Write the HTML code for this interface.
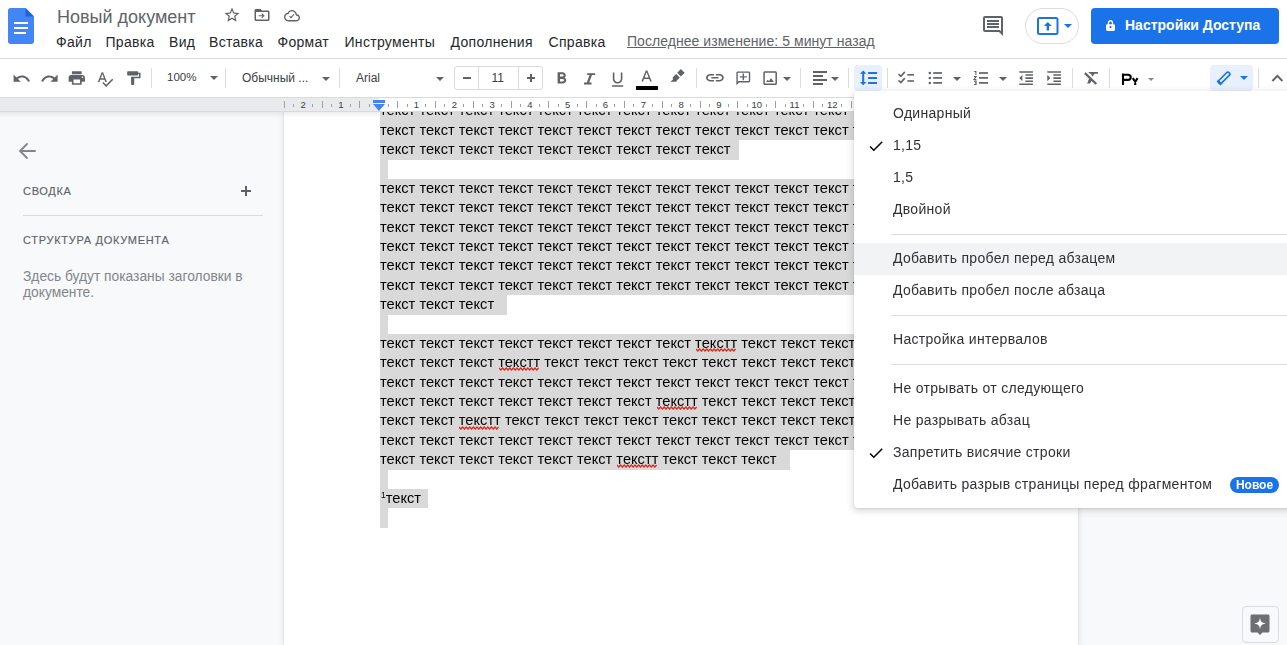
<!DOCTYPE html>
<html><head><meta charset="utf-8">
<style>
*{box-sizing:border-box;margin:0;padding:0}
html,body{width:1287px;height:645px;overflow:hidden;background:#f8f9fa;font-family:"Liberation Sans",sans-serif;color:#202124;position:relative}
.a{position:absolute}
svg{position:absolute;display:block}
#hdr{left:0;top:0;width:1287px;height:58px;background:#fff}
#hline{left:0;top:58px;width:1287px;height:1px;background:#dadce0}
#tb{left:0;top:59px;width:1287px;height:38px;background:#fff}
#title{left:57px;top:4.5px;font-size:18px;line-height:24px;color:#5f6368;white-space:nowrap}
.menu{position:absolute;top:32.7px;font-size:14px;letter-spacing:.3px;color:#26272a;white-space:nowrap;line-height:18px}
#last{left:627px;top:31.9px;letter-spacing:.05px;font-size:14px;line-height:18px;color:#5f6368;text-decoration:underline;white-space:nowrap}
#pill{left:1025px;top:8px;width:54px;height:36px;border:1px solid #dadce0;border-radius:18px;background:#fff}
#share{left:1091px;top:8px;width:188px;height:36px;border-radius:4px;background:#1a73e8}
#share span{position:absolute;left:34px;top:7.8px;font-size:14px;line-height:18px;font-weight:bold;color:#fff;white-space:nowrap}
.tsep{position:absolute;top:68px;width:1px;height:20px;background:#dadce0}
.tt{position:absolute;top:71px;font-size:12px;line-height:14px;color:#3c4043;white-space:nowrap}
.car{position:absolute;width:0;height:0;border-left:4px solid transparent;border-right:4px solid transparent;border-top:4px solid #5f6368}
#fsbox{left:454px;top:66px;width:89px;height:24px;border:1px solid #dadce0;border-radius:3px}
.act{position:absolute;top:65px;height:26px;background:#e8f0fe;border-radius:4px}
#ruler{left:0;top:97px;width:1287px;height:15px;background:#e8eaed;border-top:1px solid #d8dade;border-bottom:1px solid #d8dade}
#rwhite{left:379px;top:98px;width:603px;height:13px;background:#fff}
.rt{position:absolute;width:1px;background:#9aa0a6}
.rs{top:104px;height:3px}
.rl{top:101px;height:7px}
.rn{position:absolute;top:100px;width:20px;text-align:center;font-size:9.5px;line-height:10px;color:#3c4043}
#page{left:284px;top:112px;width:794px;height:533px;background:#fff;box-shadow:0 0 0 .5px rgba(60,64,67,.06),0 1px 5px 1px rgba(60,64,67,.12)}
#shade{left:0;top:112px;width:1287px;height:6px;background:linear-gradient(rgba(60,64,67,.09),rgba(60,64,67,0))}
.ln{position:absolute;left:380px;height:19.38px;line-height:19.38px;font-size:14.67px;color:#000;background:#d9d9d9;white-space:nowrap}
.full{width:602px;overflow:hidden}
.end{padding-right:8px}
.emp{width:8px}
.ln sup{font-size:8.5px;vertical-align:top;line-height:10px;position:relative;top:0.8px;padding-left:1px}

#side .h{position:absolute;left:23px;font-size:11px;font-weight:normal;-webkit-text-stroke:.15px #5f6368;color:#5f6368;letter-spacing:.7px;white-space:nowrap;line-height:14px}
#dd{left:854px;top:91px;width:450px;height:417px;background:#fff;border-radius:4px;box-shadow:0 2px 6px 2px rgba(60,64,67,.15),0 1px 2px 0 rgba(60,64,67,.12)}
.mi{position:absolute;left:893px;margin-top:-.2px;font-size:14px;letter-spacing:.3px;color:#303134;line-height:32px;height:32px;white-space:nowrap}
.hov{position:absolute;left:854px;width:433px;height:32px;background:#f1f3f4}
.sep{position:absolute;left:891px;width:396px;height:1px;background:#dadce0}
#badge{left:1230px;top:477px;width:49px;height:16px;border-radius:8px;background:#1a73e8;color:#fff;font-size:12px;font-weight:bold;line-height:16px;text-align:center}
#fab{left:1241.5px;top:606px;width:37px;height:37px;border:1px solid #dadce0;border-radius:4px;background:#f8f9fa}
</style></head><body>
<div id="hdr" class="a"></div>
<div id="hline" class="a"></div>
<div id="tb" class="a"></div>
<!-- docs logo -->
<svg style="left:8px;top:8px" width="26" height="36" viewBox="0 0 26 36">
<path d="M2.5 0H17.5L26 8.5V33.5C26 34.9 24.9 36 23.5 36H2.5C1.1 36 0 34.9 0 33.5V2.5C0 1.1 1.1 0 2.5 0Z" fill="#4285f4"/>
<path d="M17.5 0L26 8.5H17.5Z" fill="#1f65d6"/>
<rect x="6" y="14" width="14" height="2" fill="#fff"/>
<rect x="6" y="19" width="14" height="2" fill="#fff"/>
<rect x="6" y="24" width="12" height="2" fill="#fff"/>
</svg>
<div id="title" class="a">Новый документ</div>
<!-- star -->
<svg style="left:223px;top:6px" width="18" height="18" viewBox="0 0 24 24"><path fill="#5f6368" d="M22 9.24l-7.19-.62L12 2 9.19 8.63 2 9.24l5.46 4.73L5.82 21 12 17.27 18.18 21l-1.63-7.03L22 9.24zM12 15.4l-3.76 2.27 1-4.28-3.32-2.88 4.38-.38L12 6.1l1.71 4.04 4.38.38-3.32 2.88 1 4.28L12 15.4z"/></svg>
<!-- folder move -->
<svg style="left:252.5px;top:6px" width="18" height="18" viewBox="0 0 24 24"><path fill="#5f6368" d="M20 6h-8l-2-2H4c-1.1 0-2 .9-2 2v12c0 1.1.9 2 2 2h16c1.1 0 2-.9 2-2V8c0-1.1-.9-2-2-2zm0 12H4V8h16v10zM12.16 9.6l-1.06 1.06 1.59 1.59H7.5v1.5h5.19l-1.59 1.59 1.06 1.06L15.57 13z"/></svg>
<!-- cloud -->
<svg style="left:284px;top:7px" width="16" height="17.3" viewBox="0 0 24 24" preserveAspectRatio="none"><path fill="#5f6368" d="M19.35 10.04C18.67 6.59 15.64 4 12 4 9.11 4 6.6 5.64 5.35 8.04 2.34 8.36 0 10.91 0 14c0 3.31 2.69 6 6 6h13c2.76 0 5-2.24 5-5 0-2.64-2.05-4.780-4.65-4.96zM19 18H6c-2.21 0-4-1.79-4-4 0-2.05 1.53-3.76 3.56-3.97l1.07-.11.5-.95C8.08 7.14 9.94 6 12 6c2.62 0 4.88 1.86 5.39 4.43l.3 1.5 1.53.11c1.56.1 2.78 1.41 2.78 2.96 0 1.65-1.35 3-3 3zm-8.5-2.2l-2.6-2.6 1.1-1.1 1.5 1.5 3.9-3.9 1.1 1.1z"/></svg>
<!-- menus -->
<div class="menu" style="left:56px">Файл</div>
<div class="menu" style="left:105.5px">Правка</div>
<div class="menu" style="left:169px">Вид</div>
<div class="menu" style="left:209px">Вставка</div>
<div class="menu" style="left:277.5px">Формат</div>
<div class="menu" style="left:344.5px">Инструменты</div>
<div class="menu" style="left:450.5px">Дополнения</div>
<div class="menu" style="left:548.5px">Справка</div>
<div id="last" class="a">Последнее изменение: 5 минут назад</div>
<!-- comment icon -->
<svg style="left:981px;top:14px" width="24" height="24" viewBox="0 0 24 24"><path fill="#5f6368" d="M21.99 4c0-1.1-.89-2-1.99-2H4c-1.1 0-2 .9-2 2v12c0 1.1.9 2 2 2h14l4 4-.01-18zM20 4v13.17L18.83 16H4V4h16zM6 12h12v2H6zm0-3h12v2H6zm0-3h12v2H6z"/></svg>
<div id="pill" class="a"></div>
<svg style="left:1036px;top:16px" width="24" height="20" viewBox="0 0 24 20"><rect x="2" y="2" width="19.5" height="16" rx="1.5" fill="none" stroke="#1a73e8" stroke-width="2"/><path fill="#1a73e8" d="M11.8 6l-4 4h2.8v4.5h2.4V10h2.8z"/></svg>
<div class="car" style="left:1064px;top:24px;border-top-color:#1a73e8"></div>
<div id="share" class="a"><svg style="left:15px;top:12.3px" width="9" height="11" viewBox="0 0 10 12"><path fill="#fff" d="M2 4.5V3.2C2 1.4 3.3 0 5 0s3 1.4 3 3.2v1.3h.5c.8 0 1.5.7 1.5 1.5v4.5c0 .8-.7 1.5-1.5 1.5h-7C.7 12 0 11.3 0 10.5V6c0-.8.7-1.5 1.5-1.5zm1.5 0h3V3.2C6.5 2.2 5.8 1.5 5 1.5s-1.5.7-1.5 1.7zM5 6.6c-.7 0-1.2.5-1.2 1.2S4.3 9 5 9s1.2-.5 1.2-1.2S5.7 6.6 5 6.6z"/></svg><span>Настройки Доступа</span></div>
<!-- toolbar -->
<svg style="left:11.9px;top:68.5px" width="19.2" height="19.2" viewBox="0 0 24 24"><path fill="#5f6368" d="M12.5 8c-2.65 0-5.05.99-6.9 2.6L2 7v9h9l-3.62-3.62c1.39-1.16 3.16-1.88 5.12-1.88 3.54 0 6.55 2.31 7.6 5.5l2.37-.78C21.08 11.03 17.15 8 12.5 8z"/></svg>
<svg style="left:39.9px;top:68.5px" width="19.2" height="19.2" viewBox="0 0 24 24"><path fill="#5f6368" d="M18.4 10.6C16.55 8.99 14.15 8 11.5 8c-4.650 0-8.58 3.03-9.96 7.22L3.9 16c1.05-3.19 4.05-5.5 7.6-5.5 1.95 0 3.73.72 5.12 1.88L13 16h9V7l-3.6 3.6z"/></svg>
<svg style="left:67.3px;top:68.83px" width="19.56" height="18.13" viewBox="0 0 24 24" preserveAspectRatio="none"><path fill="#5f6368" d="M19 8H5c-1.66 0-3 1.34-3 3v6h4v4h12v-4h4v-6c0-1.66-1.34-3-3-3zm-3 11H8v-5h8v5zm3-7c-.55 0-1-.45-1-1s.45-1 1-1 1 .45 1 1-.45 1-1 1zm-1-9H6v4h12V3z"/></svg>
<svg style="left:96.4px;top:69.65px" width="18" height="18" viewBox="0 0 24 24"><path fill="#5f6368" d="M12.45 16h2.09L9.43 3H7.57L2.46 16h2.09l1.12-3h5.64l1.14 3zm-6.02-5L8.5 5.48 10.57 11H6.43zm15.16.59l-8.09 8.09L9.83 16l-1.41 1.41 5.09 5.09L23 13l-1.41-1.41z"/></svg>
<svg style="left:123.65px;top:69.74px" width="18.9" height="16.3" viewBox="0 0 24 24" preserveAspectRatio="none"><path fill="#5f6368" d="M18 4V3c0-.55-.45-1-1-1H5c-.55 0-1 .45-1 1v4c0 .55.45 1 1 1h12c.55 0 1-.45 1-1V6h1v4H9v11c0 .55.45 1 1 1h2c.55 0 1-.45 1-1v-9h8V4h-3z"/></svg>
<div class="tsep" style="left:151px"></div>
<div class="tt" style="left:167px;top:70px;font-size:11.5px">100%</div>
<div class="car" style="left:209.5px;top:76px"></div>
<div class="tsep" style="left:225px"></div>
<div class="tt" style="left:242px">Обычный ...</div>
<div class="car" style="left:322px;top:77px"></div>
<div class="tsep" style="left:339px"></div>
<div class="tt" style="left:356px">Arial</div>
<div class="car" style="left:436px;top:77px"></div>
<div id="fsbox" class="a"></div>
<div class="a" style="left:478px;top:67px;width:1px;height:22px;background:#dadce0"></div>
<div class="a" style="left:518px;top:67px;width:1px;height:22px;background:#dadce0"></div>
<div class="a" style="left:463px;top:77px;width:8px;height:2px;background:#5f6368"></div>
<div class="tt" style="left:491.5px">11</div>
<div class="a" style="left:527px;top:77px;width:8px;height:2px;background:#5f6368"></div>
<div class="a" style="left:530px;top:74px;width:2px;height:8px;background:#5f6368"></div>
<svg style="left:552.4px;top:69.3px" width="19.2" height="19.2" viewBox="0 0 24 24"><path fill="#5f6368" d="M15.6 10.79c.97-.67 1.65-1.77 1.65-2.79 0-2.26-1.75-4-4-4H7v14h7.04c2.09 0 3.71-1.7 3.71-3.79 0-1.52-.86-2.82-2.15-3.42zM10 6.5h3c.83 0 1.5.67 1.5 1.5s-.67 1.5-1.5 1.5h-3v-3zm3.5 9H10v-3h3.5c.83 0 1.5.67 1.5 1.5s-.67 1.5-1.5 1.5z"/></svg>
<svg style="left:580.2px;top:69.6px" width="19.2" height="19.2" viewBox="0 0 24 24"><path fill="#5f6368" d="M9 4v2.3h3L8.5 15.7H5V18h9.5v-2.3h-3l3.5-9.4H19V4z"/></svg>
<svg style="left:608.2px;top:69.9px" width="19.2" height="19.2" viewBox="0 0 24 24"><path fill="#5f6368" d="M12 17c3.31 0 6-2.69 6-6V3h-2v8c0 2.2-1.8 4-4 4s-4-1.8-4-4V3H6v8c0 3.31 2.69 6 6 6zm-7 2v2h14v-2H5z"/></svg>
<svg style="left:637px;top:67.8px" width="19.2" height="19.2" viewBox="0 0 24 24"><path fill="#5f6368" d="M11 3L5.5 17h2.1l1.2-3.2h6.4l1.2 3.2h2.1L13 3h-2zm-1.5 9L12 5.3 14.5 12H9.5z"/></svg>
<div class="a" style="left:636px;top:86px;width:22px;height:4px;background:#000"></div>
<svg style="left:664px;top:64px" width="28" height="24" viewBox="0 0 28 24"><path fill="#5f6368" d="M16.9 5L20.6 8.7 16.9 12.4 13.2 8.7Z M12.2 10L15.8 13.6 12.5 16.9 12.3 17.7H6.4L9.1 15.3 8.6 13.6Z"/></svg>
<div class="tsep" style="left:696px"></div>
<svg style="left:706px;top:74.2px" width="17.8" height="7.4" viewBox="2 7 20 10" preserveAspectRatio="none"><path fill="#5f6368" d="M3.9 12c0-1.71 1.39-3.1 3.1-3.1h4V7H7c-2.76 0-5 2.24-5 5s2.24 5 5 5h4v-1.9H7c-1.71 0-3.1-1.39-3.1-3.1zM8 13h8v-2H8v2zm9-6h-4v1.9h4c1.71 0 3.1 1.39 3.1 3.1s-1.39 3.1-3.1 3.1h-4V17h4c2.76 0 5-2.24 5-5s-2.24-5-5-5z"/></svg>
<svg style="left:734.7px;top:69.7px" width="16.6" height="16.6" viewBox="0 0 24 24"><g transform="translate(24 0) scale(-1 1)"><path fill="#5f6368" d="M22 4c0-1.1-.9-2-2-2H4c-1.1 0-2 .9-2 2v12c0 1.1.9 2 2 2h14l4 4V4zm-2 13.17L18.83 16H4V4h16v13.17zM13 5h-2v4H7v2h4v4h2v-4h4V9h-4z"/></g></svg>
<svg style="left:760.9px;top:68.8px" width="18.24" height="18.24" viewBox="0 0 24 24"><path fill="#5f6368" d="M19 5v14H5V5h14m0-2H5c-1.1 0-2 .9-2 2v14c0 1.1.9 2 2 2h14c1.1 0 2-.9 2-2V5c0-1.1-.9-2-2-2zM6.6 17.2L9 14 10.6 16 13.1 12 17 17.2z"/></svg>
<div class="car" style="left:783px;top:77px"></div>
<div class="tsep" style="left:800px"></div>
<div class="a" style="left:813px;top:71px;width:14px;height:2px;background:#5f6368"></div>
<div class="a" style="left:813px;top:75px;width:10px;height:2px;background:#5f6368"></div>
<div class="a" style="left:813px;top:79px;width:14px;height:2px;background:#5f6368"></div>
<div class="a" style="left:813px;top:83px;width:10px;height:2px;background:#5f6368"></div>
<div class="car" style="left:831px;top:77px"></div>
<div class="tsep" style="left:848px"></div>
<div class="act" style="left:854px;width:28px"></div>
<svg style="left:852px;top:64px" width="32" height="28" viewBox="0 0 32 28"><path fill="#1a73e8" d="M11.2 6.5L14.4 9.8H12.2V18H14.4L11.2 21.3 8 18H10.2V9.8H8Z"/><rect x="16.1" y="8" width="8.9" height="2" fill="#1a73e8"/><rect x="16.1" y="13" width="8.9" height="2" fill="#1a73e8"/><rect x="16.1" y="18" width="8.9" height="2" fill="#1a73e8"/></svg>
<div class="tsep" style="left:887px"></div>


<svg style="left:892px;top:66px" width="100" height="24" viewBox="892 66 100 24">
<path d="M898.5 74.1L900.9 76.3 904.8 71.9M898.5 80.3L900.9 82.5 904.8 78.1" fill="none" stroke="#5f6368" stroke-width="1.6"/>
<rect x="907.4" y="74" width="6.5" height="1.6" fill="#5f6368"/><rect x="907.4" y="80.2" width="6.5" height="1.6" fill="#5f6368"/>
<circle cx="929.8" cy="73" r="1.25" fill="#5f6368"/><circle cx="929.8" cy="77.9" r="1.25" fill="#5f6368"/><circle cx="929.8" cy="82.9" r="1.25" fill="#5f6368"/>
<rect x="933.2" y="72.15" width="8.8" height="1.7" fill="#5f6368"/><rect x="933.2" y="77.05" width="8.8" height="1.7" fill="#5f6368"/><rect x="933.2" y="82.05" width="8.8" height="1.7" fill="#5f6368"/>
<rect x="979" y="72.15" width="9" height="1.7" fill="#5f6368"/><rect x="979" y="77.05" width="9" height="1.7" fill="#5f6368"/><rect x="979" y="82.05" width="9" height="1.7" fill="#5f6368"/>
<path d="M974.2 71.5H975.9V75M974 76.6H976.2L974 79.4H976.4M974 81.1H976.1V84.4H974M975 82.7H976.1" fill="none" stroke="#5f6368" stroke-width="1.05"/>
</svg>
<div class="car" style="left:953px;top:77px"></div>

<div class="car" style="left:999px;top:77px"></div>
<svg style="left:1016.8px;top:68.8px" width="18.24" height="18.24" viewBox="0 0 24 24"><path fill="#5f6368" d="M11 17h10v-2H11v2zm-8-5l4 4V8l-4 4zm0 9h18v-2H3v2zM3 3v2h18V3H3zm8 6h10V7H11v2zm0 4h10v-2H11v2z"/></svg>
<svg style="left:1044.7px;top:68.8px" width="18.24" height="18.24" viewBox="0 0 24 24"><path fill="#5f6368" d="M3 21h18v-2H3v2zM3 8v8l4-4-4-4zm8 9h10v-2H11v2zM3 3v2h18V3H3zm8 6h10V7H11v2zm0 4h10v-2H11v2z"/></svg>
<div class="tsep" style="left:1072px"></div>
<svg style="left:1078px;top:66px" width="26" height="24" viewBox="0 0 26 24"><path fill="#5f6368" d="M10.2 5.9H19.9V7.8H12Z M13 7.8H16.4L14.3 10.8Z M11.3 12L13.9 14.4 12 17.6H9.1Z"/><path d="M6.9 7.1L18.3 18" stroke="#5f6368" stroke-width="2.2" fill="none"/></svg>
<div class="tsep" style="left:1109px"></div>
<svg style="left:1115px;top:66px" width="30" height="24" viewBox="0 0 30 24"><path d="M8 7.6V18.9M7 8.7H12.8C14.9 8.7 15.8 9.6 15.8 11.3S14.9 13.9 12.8 13.9H8M17.8 12.2L20.2 15.8L22.6 12.2M20.2 15.6V19" fill="none" stroke="#000" stroke-width="2.1"/></svg>
<div class="car" style="left:1147.5px;top:78px;border-width:3px 3px 0 3px;border-top-color:#80868b"></div>
<div class="act" style="left:1210px;width:43px"></div>
<svg style="left:1214px;top:68px" width="20" height="20" viewBox="0 0 20 20"><g transform="rotate(-45 10 10)"><rect x="3" y="8.1" width="14.4" height="3.8" rx="1.9" fill="none" stroke="#1a73e8" stroke-width="1.7"/><rect x="2.2" y="7.3" width="2.6" height="5.4" fill="#1a73e8"/></g></svg>
<div class="car" style="left:1240px;top:76px;border-top-color:#1a73e8"></div>
<div class="tsep" style="left:1258px"></div>
<svg style="left:1265.8px;top:66.7px" width="22.8" height="22.8" viewBox="0 0 24 24"><path fill="#5f6368" d="M12 8l-6 6 1.41 1.41L12 10.83l4.59 4.58L18 14z"/></svg>
<!-- sidebar -->
<div id="side">
<svg style="left:17px;top:141px" width="20" height="20" viewBox="0 0 20 20"><path d="M18 10H3M10 3L3 10l7 7" fill="none" stroke="#80868b" stroke-width="1.8" stroke-linecap="round"/></svg>
<div class="h" style="top:184.4px">СВОДКА</div>
<div class="a" style="left:241px;top:190px;width:10px;height:2px;background:#5f6368"></div>
<div class="a" style="left:245px;top:186px;width:2px;height:10px;background:#5f6368"></div>
<div class="a" style="left:23px;top:215px;width:240px;height:1px;background:#dadce0"></div>
<div class="h" style="top:233px">СТРУКТУРА ДОКУМЕНТА</div>
<div class="a" style="left:23px;top:268.8px;width:250px;font-size:13.8px;line-height:16.5px;color:#80868b">Здесь будут показаны заголовки в документе.</div>
</div>
<div id="page" class="a"></div>
<div id="shade" class="a"></div>
<div class="a" style="left:0;top:0;width:1px;height:1px;will-change:transform">
<div class="ln full" style="top:101.40px">текст текст текст текст текст текст текст текст текст текст текст текст текст текст текст</div>
<div class="ln full" style="top:120.78px">текст текст текст текст текст текст текст текст текст текст текст текст текст текст текст</div>
<div class="ln" style="top:140.16px;padding-right:9px">текст текст текст текст текст текст текст текст текст</div>
<div class="ln emp" style="top:159.54px"></div>
<div class="ln full" style="top:178.92px">текст текст текст текст текст текст текст текст текст текст текст текст текст текст текст</div>
<div class="ln full" style="top:198.30px">текст текст текст текст текст текст текст текст текст текст текст текст текст текст текст</div>
<div class="ln full" style="top:217.68px">текст текст текст текст текст текст текст текст текст текст текст текст текст текст текст</div>
<div class="ln full" style="top:237.06px">текст текст текст текст текст текст текст текст текст текст текст текст текст текст текст</div>
<div class="ln full" style="top:256.44px">текст текст текст текст текст текст текст текст текст текст текст текст текст текст текст</div>
<div class="ln full" style="top:275.82px">текст текст текст текст текст текст текст текст текст текст текст текст текст текст текст</div>
<div class="ln" style="top:295.20px;padding-right:13px">текст текст текст</div>
<div class="ln emp" style="top:314.58px"></div>
<div class="ln full" style="top:333.96px">текст текст текст текст текст текст текст текст текстт текст текст текст текст текст</div>
<div class="ln full" style="top:353.34px">текст текст текст текстт текст текст текст текст текст текст текст текст текст текст</div>
<div class="ln full" style="top:372.72px">текст текст текст текст текст текст текст текст текст текст текст текст текст текст текст</div>
<div class="ln full" style="top:392.10px">текст текст текст текст текст текст текст текстт текст текст текст текст текст текст</div>
<div class="ln full" style="top:411.48px">текст текст текстт текст текст текст текст текст текст текст текст текст текст текст</div>
<div class="ln full" style="top:430.86px">текст текст текст текст текст текст текст текст текст текст текст текст текст текст текст</div>
<div class="ln" style="top:450.24px;padding-right:13px">текст текст текст текст текст текст текстт текст текст текст</div>
<div class="ln emp" style="top:469.62px"></div>
<div class="ln" style="top:489.00px;padding-right:6.5px"><sup>1</sup>текст</div>
<div class="ln emp" style="top:508.38px"></div>
<svg style="left:695.9px;top:348.0px" width="40.6" height="5"><path d="M0.0 1 L1.8 3 L3.6 1 L5.4 3 L7.2 1 L9.0 3 L10.8 1 L12.6 3 L14.4 1 L16.2 3 L18.0 1 L19.8 3 L21.6 1 L23.4 3 L25.2 1 L27.0 3 L28.8 1 L30.6 3 L32.4 1 L34.2 3 L36.0 1 L37.8 3 L39.6 1" fill="none" stroke="#d52a20" stroke-width="1.25"/></svg>
<svg style="left:498.8px;top:367.3px" width="40.6" height="5"><path d="M0.0 1 L1.8 3 L3.6 1 L5.4 3 L7.2 1 L9.0 3 L10.8 1 L12.6 3 L14.4 1 L16.2 3 L18.0 1 L19.8 3 L21.6 1 L23.4 3 L25.2 1 L27.0 3 L28.8 1 L30.6 3 L32.4 1 L34.2 3 L36.0 1 L37.8 3 L39.6 1" fill="none" stroke="#d52a20" stroke-width="1.25"/></svg>
<svg style="left:656.5px;top:406.1px" width="40.6" height="5"><path d="M0.0 1 L1.8 3 L3.6 1 L5.4 3 L7.2 1 L9.0 3 L10.8 1 L12.6 3 L14.4 1 L16.2 3 L18.0 1 L19.8 3 L21.6 1 L23.4 3 L25.2 1 L27.0 3 L28.8 1 L30.6 3 L32.4 1 L34.2 3 L36.0 1 L37.8 3 L39.6 1" fill="none" stroke="#d52a20" stroke-width="1.25"/></svg>
<svg style="left:459.4px;top:425.5px" width="40.6" height="5"><path d="M0.0 1 L1.8 3 L3.6 1 L5.4 3 L7.2 1 L9.0 3 L10.8 1 L12.6 3 L14.4 1 L16.2 3 L18.0 1 L19.8 3 L21.6 1 L23.4 3 L25.2 1 L27.0 3 L28.8 1 L30.6 3 L32.4 1 L34.2 3 L36.0 1 L37.8 3 L39.6 1" fill="none" stroke="#d52a20" stroke-width="1.25"/></svg>
<svg style="left:617.1px;top:464.2px" width="40.6" height="5"><path d="M0.0 1 L1.8 3 L3.6 1 L5.4 3 L7.2 1 L9.0 3 L10.8 1 L12.6 3 L14.4 1 L16.2 3 L18.0 1 L19.8 3 L21.6 1 L23.4 3 L25.2 1 L27.0 3 L28.8 1 L30.6 3 L32.4 1 L34.2 3 L36.0 1 L37.8 3 L39.6 1" fill="none" stroke="#d52a20" stroke-width="1.25"/></svg>
</div>
<div id="ruler" class="a"></div>
<div id="rwhite" class="a"></div>
<div class="a" style="left:373px;top:100px;width:12px;height:3px;background:#4285f4"></div>
<svg style="left:373px;top:103.5px" width="12" height="7" viewBox="0 0 12 7"><path d="M0 0H12L6 7Z" fill="#4285f4"/></svg>
<div class="rt rl" style="left:283.70px"></div>
<div class="rt rs" style="left:293.15px"></div>
<div class="rn" style="left:293.10px">2</div>
<div class="rt rs" style="left:312.05px"></div>
<div class="rt rl" style="left:321.50px"></div>
<div class="rt rs" style="left:330.95px"></div>
<div class="rn" style="left:330.90px">1</div>
<div class="rt rs" style="left:349.85px"></div>
<div class="rt rl" style="left:359.30px"></div>
<div class="rt rs" style="left:368.75px"></div>
<div class="rt rs" style="left:387.65px"></div>
<div class="rt rl" style="left:397.10px"></div>
<div class="rt rs" style="left:406.55px"></div>
<div class="rn" style="left:406.50px">1</div>
<div class="rt rs" style="left:425.45px"></div>
<div class="rt rl" style="left:434.90px"></div>
<div class="rt rs" style="left:444.35px"></div>
<div class="rn" style="left:444.30px">2</div>
<div class="rt rs" style="left:463.25px"></div>
<div class="rt rl" style="left:472.70px"></div>
<div class="rt rs" style="left:482.15px"></div>
<div class="rn" style="left:482.10px">3</div>
<div class="rt rs" style="left:501.05px"></div>
<div class="rt rl" style="left:510.50px"></div>
<div class="rt rs" style="left:519.95px"></div>
<div class="rn" style="left:519.90px">4</div>
<div class="rt rs" style="left:538.85px"></div>
<div class="rt rl" style="left:548.30px"></div>
<div class="rt rs" style="left:557.75px"></div>
<div class="rn" style="left:557.70px">5</div>
<div class="rt rs" style="left:576.65px"></div>
<div class="rt rl" style="left:586.10px"></div>
<div class="rt rs" style="left:595.55px"></div>
<div class="rn" style="left:595.50px">6</div>
<div class="rt rs" style="left:614.45px"></div>
<div class="rt rl" style="left:623.90px"></div>
<div class="rt rs" style="left:633.35px"></div>
<div class="rn" style="left:633.30px">7</div>
<div class="rt rs" style="left:652.25px"></div>
<div class="rt rl" style="left:661.70px"></div>
<div class="rt rs" style="left:671.15px"></div>
<div class="rn" style="left:671.10px">8</div>
<div class="rt rs" style="left:690.05px"></div>
<div class="rt rl" style="left:699.50px"></div>
<div class="rt rs" style="left:708.95px"></div>
<div class="rn" style="left:708.90px">9</div>
<div class="rt rs" style="left:727.85px"></div>
<div class="rt rl" style="left:737.30px"></div>
<div class="rt rs" style="left:746.75px"></div>
<div class="rn" style="left:746.70px">10</div>
<div class="rt rs" style="left:765.65px"></div>
<div class="rt rl" style="left:775.10px"></div>
<div class="rt rs" style="left:784.55px"></div>
<div class="rn" style="left:784.50px">11</div>
<div class="rt rs" style="left:803.45px"></div>
<div class="rt rl" style="left:812.90px"></div>
<div class="rt rs" style="left:822.35px"></div>
<div class="rn" style="left:822.30px">12</div>
<div class="rt rs" style="left:841.25px"></div>
<div class="rt rl" style="left:850.70px"></div>
<div class="rt rs" style="left:860.15px"></div>
<div class="rn" style="left:860.10px">13</div>
<div class="rt rs" style="left:879.05px"></div>
<div class="rt rl" style="left:888.50px"></div>
<div class="rt rs" style="left:897.95px"></div>
<div class="rn" style="left:897.90px">14</div>
<div class="rt rs" style="left:916.85px"></div>
<div class="rt rl" style="left:926.30px"></div>
<div class="rt rs" style="left:935.75px"></div>
<div class="rn" style="left:935.70px">15</div>
<div class="rt rs" style="left:954.65px"></div>
<div class="rt rl" style="left:964.10px"></div>
<div class="rt rs" style="left:973.55px"></div><!-- dropdown -->
<div id="dd" class="a"></div>
<div class="hov" style="top:242.5px"></div>
<div class="mi" style="top:97px">Одинарный</div>
<svg style="left:867px;top:136.7px" width="18" height="18" viewBox="0 0 24 24"><path fill="#000" d="M9 16.17L4.83 12l-1.42 1.41L9 19 21 7l-1.41-1.41z"/></svg>
<div class="mi" style="top:129px">1,15</div>
<div class="mi" style="top:161px">1,5</div>
<div class="mi" style="top:193px">Двойной</div>
<div class="sep" style="top:234px"></div>
<div class="mi" style="top:242.5px">Добавить пробел перед абзацем</div>
<div class="mi" style="top:274.5px">Добавить пробел после абзаца</div>
<div class="sep" style="top:315px"></div>
<div class="mi" style="top:323.5px">Настройка интервалов</div>
<div class="sep" style="top:364px"></div>
<div class="mi" style="top:372px">Не отрывать от следующего</div>
<div class="mi" style="top:404px">Не разрывать абзац</div>
<svg style="left:867px;top:443.5px" width="18" height="18" viewBox="0 0 24 24"><path fill="#000" d="M9 16.17L4.83 12l-1.42 1.41L9 19 21 7l-1.41-1.41z"/></svg>
<div class="mi" style="top:436px">Запретить висячие строки</div>
<div class="mi" style="top:468px">Добавить разрыв страницы перед фрагментом</div>
<div id="badge" class="a">Новое</div>
<!-- fab -->
<div id="fab" class="a"></div>
<svg style="left:1249.5px;top:614px" width="20" height="22" viewBox="0 0 20 22"><path fill="#6d6f72" d="M2 0.5h16c.8 0 1.5.7 1.5 1.5v15c0 .8-.7 1.5-1.5 1.5h-5.5L10 21l-2.5-2.5H2c-.8 0-1.5-.7-1.5-1.5V2C.5 1.2 1.2.5 2 .5z"/><path fill="#fff" d="M10 3.5C10.5 7.5 11.5 8.5 15.5 9.5 11.5 10.5 10.5 11.5 10 15.5 9.5 11.5 8.5 10.5 4.5 9.5 8.5 8.5 9.5 7.5 10 3.5z"/></svg>
</body></html>
